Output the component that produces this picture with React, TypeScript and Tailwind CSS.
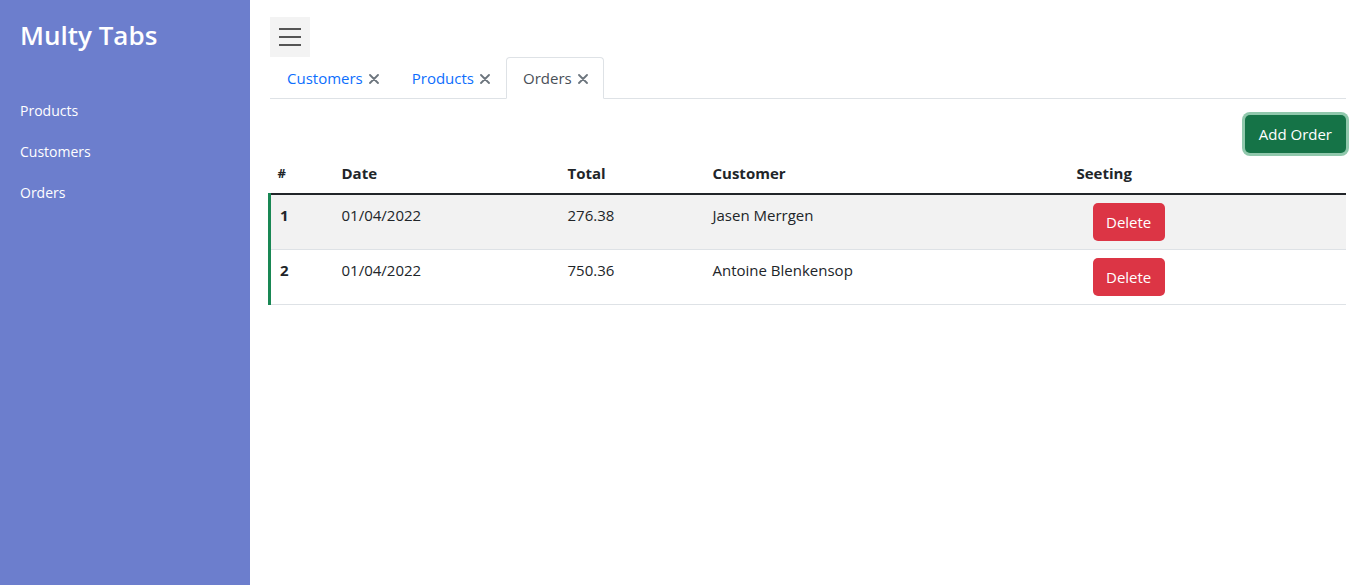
import React, { useState } from 'react';

type Order = { id: number; date: string; total: string; customer: string };

const orders: Order[] = [
  { id: 1, date: '01/04/2022', total: '276.38', customer: 'Jasen Merrgen' },
  { id: 2, date: '01/04/2022', total: '750.36', customer: 'Antoine Blenkensop' },
];

const tabs = ['Customers', 'Products', 'Orders'];

const CloseIcon = () => (
  <svg width="10" height="10" viewBox="0 0 10 10" className="mt-[1px]">
    <path d="M1 1L9 9M9 1L1 9" stroke="#6c757d" strokeWidth="1.8" strokeLinecap="round" />
  </svg>
);

const App: React.FC = () => {
  const [activeTab, setActiveTab] = useState('Orders');

  return (
    <div className="flex h-[585px] w-full overflow-hidden bg-white text-[#212529] font-['Open_Sans','Noto_Sans',sans-serif]">
      <aside className="w-[250px] shrink-0 bg-[#6c7ecd] px-5 pt-[16px]">
        <h1 className="text-[26px] font-semibold leading-[38px] text-white">Multy Tabs</h1>
        <nav className="mt-[46px] flex flex-col gap-[20px] text-[14px] leading-[21px] text-white">
          <a href="#">Products</a>
          <a href="#">Customers</a>
          <a href="#">Orders</a>
        </nav>
      </aside>

      <main className="flex-1 pl-5 pr-[18px] pt-[17px]">
        <button className="flex h-10 w-10 flex-col items-center justify-center gap-[6px] bg-[#f3f3f3]">
          <span className="block h-[2px] w-[22px] bg-[#555]" />
          <span className="block h-[2px] w-[22px] bg-[#555]" />
          <span className="block h-[2px] w-[22px] bg-[#555]" />
        </button>

        <ul className="flex border-b border-[#dee2e6] text-[15px] leading-[24px]">
          {tabs.map((t) => {
            const active = t === activeTab;
            return (
              <li key={t} className="-mb-px">
                <button
                  onClick={() => setActiveTab(t)}
                  className={
                    active
                      ? 'flex items-center gap-[6px] rounded-t-[4px] border border-[#dee2e6] border-b-white bg-white pl-4 pr-[15px] py-2 text-[#495057]'
                      : 'flex items-center gap-[6px] border border-transparent pl-4 pr-[15px] py-2 text-[#0d6efd]'
                  }
                >
                  {t}
                  <CloseIcon />
                </button>
              </li>
            );
          })}
        </ul>

        <div className="mt-[16px] flex justify-end">
          <button className="rounded-[5px] bg-[#157347] px-[14px] py-[7px] text-[15px] leading-[24px] text-white ring-[3px] ring-[#90c8ac]">
            Add Order
          </button>
        </div>

        <table className="-ml-[2px] w-[calc(100%+2px)] border-collapse text-[15px] leading-[24px]">
          <thead>
            <tr className="border-b-2 border-[#212529] text-left font-bold">
              <th className="w-[64px] p-2 text-[13px]">#</th>
              <th className="w-[226px] p-2">Date</th>
              <th className="w-[145px] p-2">Total</th>
              <th className="w-[364px] p-2">Customer</th>
              <th className="p-2">Seeting</th>
            </tr>
          </thead>
          <tbody>
            {orders.map((o, i) => (
              <tr key={o.id} className={`border-b border-[#dee2e6] ${i % 2 === 0 ? 'bg-[#f2f2f2]' : 'bg-white'}`}>
                <td className="border-l-[3px] border-[#198754] p-2 pl-[9px] align-top font-bold">{o.id}</td>
                <td className="p-2 align-top">{o.date}</td>
                <td className="p-2 align-top">{o.total}</td>
                <td className="p-2 align-top">{o.customer}</td>
                <td className="p-2 align-top">
                  <button className="ml-4 rounded-[5px] bg-[#dc3545] px-[13.5px] py-[7px] text-white">Delete</button>
                </td>
              </tr>
            ))}
          </tbody>
        </table>
      </main>
    </div>
  );
};

export default App;
